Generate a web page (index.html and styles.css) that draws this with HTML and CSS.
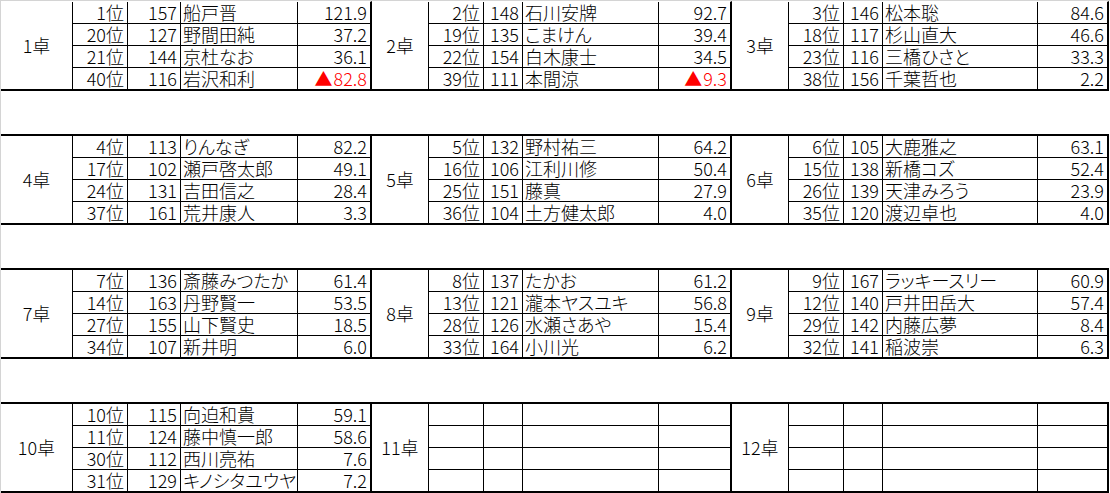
FILE: index.html
```html
<!DOCTYPE html>
<html lang="ja">
<head>
<meta charset="utf-8">
<title>卓組</title>
<link rel="stylesheet" href="styles.css">
</head>
<body>
<div class="sheet">

  <div class="block a first">
    <div class="cell label">1卓</div>
    <div class="cell rank">1位</div><div class="cell num">157</div><div class="cell name">船戸晋</div><div class="cell score">121.9</div>
    <div class="cell rank">20位</div><div class="cell num">127</div><div class="cell name">野間田純</div><div class="cell score">37.2</div>
    <div class="cell rank">21位</div><div class="cell num">144</div><div class="cell name">京杜なお</div><div class="cell score">36.1</div>
    <div class="cell rank">40位</div><div class="cell num">116</div><div class="cell name">岩沢和利</div><div class="cell score neg"><span class="tri">▲</span>82.8</div>
  </div>

  <div class="block b first">
    <div class="cell label">2卓</div>
    <div class="cell rank">2位</div><div class="cell num">148</div><div class="cell name">石川安牌</div><div class="cell score">92.7</div>
    <div class="cell rank">19位</div><div class="cell num">135</div><div class="cell name">こまけん</div><div class="cell score">39.4</div>
    <div class="cell rank">22位</div><div class="cell num">154</div><div class="cell name">白木康士</div><div class="cell score">34.5</div>
    <div class="cell rank">39位</div><div class="cell num">111</div><div class="cell name">本間涼</div><div class="cell score neg"><span class="tri">▲</span>9.3</div>
  </div>

  <div class="block c first">
    <div class="cell label">3卓</div>
    <div class="cell rank">3位</div><div class="cell num">146</div><div class="cell name">松本聡</div><div class="cell score">84.6</div>
    <div class="cell rank">18位</div><div class="cell num">117</div><div class="cell name">杉山直大</div><div class="cell score">46.6</div>
    <div class="cell rank">23位</div><div class="cell num">116</div><div class="cell name">三橋ひさと</div><div class="cell score">33.3</div>
    <div class="cell rank">38位</div><div class="cell num">156</div><div class="cell name">千葉哲也</div><div class="cell score">2.2</div>
  </div>

  <div class="block a">
    <div class="cell label">4卓</div>
    <div class="cell rank">4位</div><div class="cell num">113</div><div class="cell name">りんなぎ</div><div class="cell score">82.2</div>
    <div class="cell rank">17位</div><div class="cell num">102</div><div class="cell name">瀬戸啓太郎</div><div class="cell score">49.1</div>
    <div class="cell rank">24位</div><div class="cell num">131</div><div class="cell name">吉田信之</div><div class="cell score">28.4</div>
    <div class="cell rank">37位</div><div class="cell num">161</div><div class="cell name">荒井康人</div><div class="cell score">3.3</div>
  </div>

  <div class="block b">
    <div class="cell label">5卓</div>
    <div class="cell rank">5位</div><div class="cell num">132</div><div class="cell name">野村祐三</div><div class="cell score">64.2</div>
    <div class="cell rank">16位</div><div class="cell num">106</div><div class="cell name">江利川修</div><div class="cell score">50.4</div>
    <div class="cell rank">25位</div><div class="cell num">151</div><div class="cell name">藤真</div><div class="cell score">27.9</div>
    <div class="cell rank">36位</div><div class="cell num">104</div><div class="cell name">土方健太郎</div><div class="cell score">4.0</div>
  </div>

  <div class="block c">
    <div class="cell label">6卓</div>
    <div class="cell rank">6位</div><div class="cell num">105</div><div class="cell name">大鹿雅之</div><div class="cell score">63.1</div>
    <div class="cell rank">15位</div><div class="cell num">138</div><div class="cell name">新橋コズ</div><div class="cell score">52.4</div>
    <div class="cell rank">26位</div><div class="cell num">139</div><div class="cell name">天津みろう</div><div class="cell score">23.9</div>
    <div class="cell rank">35位</div><div class="cell num">120</div><div class="cell name">渡辺卓也</div><div class="cell score">4.0</div>
  </div>

  <div class="block a">
    <div class="cell label">7卓</div>
    <div class="cell rank">7位</div><div class="cell num">136</div><div class="cell name">斎藤みつたか</div><div class="cell score">61.4</div>
    <div class="cell rank">14位</div><div class="cell num">163</div><div class="cell name">丹野賢一</div><div class="cell score">53.5</div>
    <div class="cell rank">27位</div><div class="cell num">155</div><div class="cell name">山下賢史</div><div class="cell score">18.5</div>
    <div class="cell rank">34位</div><div class="cell num">107</div><div class="cell name">新井明</div><div class="cell score">6.0</div>
  </div>

  <div class="block b">
    <div class="cell label">8卓</div>
    <div class="cell rank">8位</div><div class="cell num">137</div><div class="cell name">たかお</div><div class="cell score">61.2</div>
    <div class="cell rank">13位</div><div class="cell num">121</div><div class="cell name">瀧本ヤスユキ</div><div class="cell score">56.8</div>
    <div class="cell rank">28位</div><div class="cell num">126</div><div class="cell name">水瀬さあや</div><div class="cell score">15.4</div>
    <div class="cell rank">33位</div><div class="cell num">164</div><div class="cell name">小川光</div><div class="cell score">6.2</div>
  </div>

  <div class="block c">
    <div class="cell label">9卓</div>
    <div class="cell rank">9位</div><div class="cell num">167</div><div class="cell name">ラッキースリー</div><div class="cell score">60.9</div>
    <div class="cell rank">12位</div><div class="cell num">140</div><div class="cell name">戸井田岳大</div><div class="cell score">57.4</div>
    <div class="cell rank">29位</div><div class="cell num">142</div><div class="cell name">内藤広夢</div><div class="cell score">8.4</div>
    <div class="cell rank">32位</div><div class="cell num">141</div><div class="cell name">稲波崇</div><div class="cell score">6.3</div>
  </div>

  <div class="block a">
    <div class="cell label">10卓</div>
    <div class="cell rank">10位</div><div class="cell num">115</div><div class="cell name">向迫和貴</div><div class="cell score">59.1</div>
    <div class="cell rank">11位</div><div class="cell num">124</div><div class="cell name">藤中慎一郎</div><div class="cell score">58.6</div>
    <div class="cell rank">30位</div><div class="cell num">112</div><div class="cell name">西川亮祐</div><div class="cell score">7.6</div>
    <div class="cell rank">31位</div><div class="cell num">129</div><div class="cell name">キノシタユウヤ</div><div class="cell score">7.2</div>
  </div>

  <div class="block b">
    <div class="cell label">11卓</div>
    <div class="cell rank"></div><div class="cell num"></div><div class="cell name"></div><div class="cell score"></div>
    <div class="cell rank"></div><div class="cell num"></div><div class="cell name"></div><div class="cell score"></div>
    <div class="cell rank"></div><div class="cell num"></div><div class="cell name"></div><div class="cell score"></div>
    <div class="cell rank"></div><div class="cell num"></div><div class="cell name"></div><div class="cell score"></div>
  </div>

  <div class="block c">
    <div class="cell label">12卓</div>
    <div class="cell rank"></div><div class="cell num"></div><div class="cell name"></div><div class="cell score"></div>
    <div class="cell rank"></div><div class="cell num"></div><div class="cell name"></div><div class="cell score"></div>
    <div class="cell rank"></div><div class="cell num"></div><div class="cell name"></div><div class="cell score"></div>
    <div class="cell rank"></div><div class="cell num"></div><div class="cell name"></div><div class="cell score"></div>
  </div>

</div>
</body>
</html>
```

FILE: styles.css
```css
html, body {
  margin: 0;
  padding: 0;
  background: #ffffff;
}

body {
  width: 1110px;
  height: 493px;
  overflow: hidden;
  font-family: "Noto Sans CJK JP", "Noto Sans", sans-serif;
  font-size: 18px;
  font-weight: 300;
  color: #000000;
}

.sheet {
  box-sizing: border-box;
  width: 1110px;
  height: 493px;
  border-top: 1px solid #d4d4d4;
  border-left: 1px solid #d4d4d4;
  display: grid;
  grid-template-columns: 371px 360px 377px;
  grid-auto-rows: min-content;
  row-gap: 43px;
  align-content: start;
}

.block {
  display: grid;
  grid-template-rows: 22px 22px 22px 21px;
  border-top: 2px solid #000000;
  border-bottom: 2px solid #000000;
  border-right: 2px solid #000000;
}

.block.first {
  border-top: 1px solid transparent;
}

.block.a { grid-template-columns: 72px 55px 53px 117px 72px; }
.block.b { grid-template-columns: 57px 55px 39px 136px 71px; }
.block.c { grid-template-columns: 57px 55px 39px 155px 69px; }

.cell {
  box-sizing: border-box;
  border-right: 1px solid #000000;
  border-bottom: 1px solid #000000;
  line-height: 21px;
  height: 100%;
  white-space: nowrap;
}

.block > .cell:nth-last-child(-n+4) {
  border-bottom: none;
}

.label {
  grid-column: 1;
  grid-row: 1 / span 4;
  border-bottom: none;
  display: flex;
  align-items: center;
  justify-content: center;
}

.rank,
.num {
  text-align: right;
  padding-right: 3px;
}

.name {
  text-align: left;
  padding-left: 2px;
  font-feature-settings: "palt";
}

.score {
  text-align: right;
  padding-right: 3px;
  border-right: none;
}

.neg {
  color: #ff0000;
}

.tri {
  margin-right: 1px;
}
```
